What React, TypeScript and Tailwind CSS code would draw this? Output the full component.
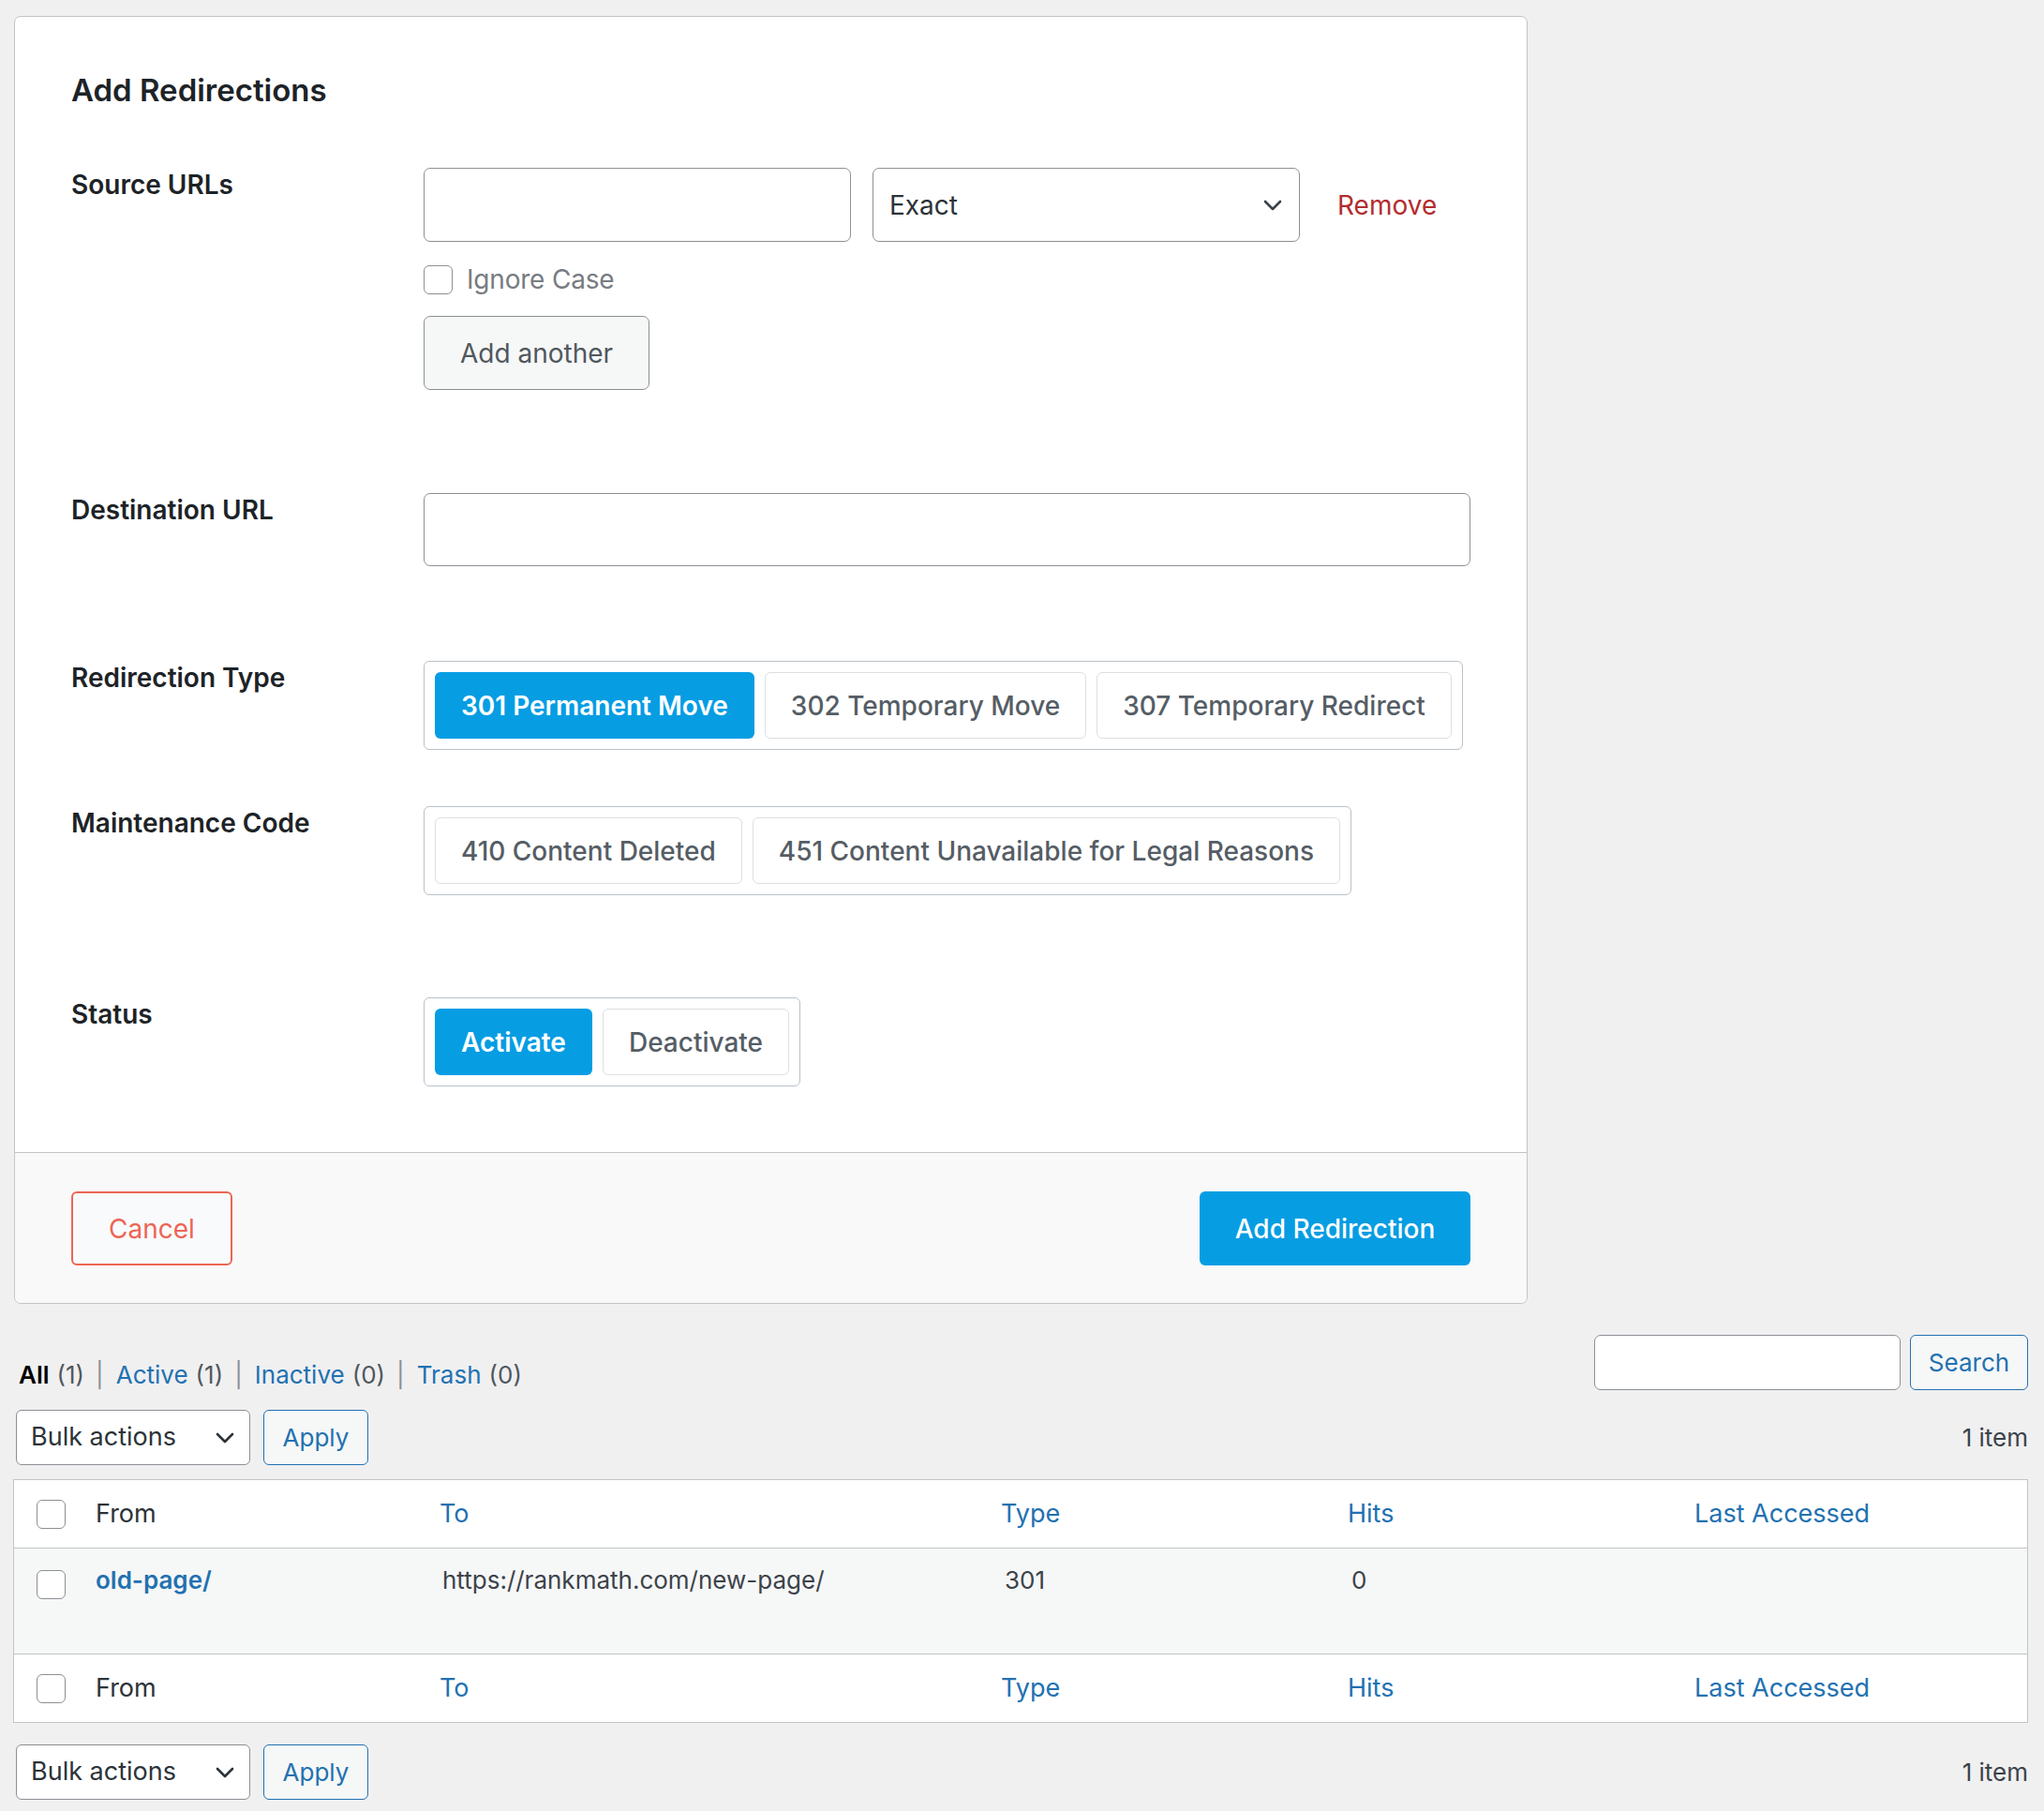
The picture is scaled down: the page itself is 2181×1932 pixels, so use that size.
import React from "react";

function Check() {
  return <span className="block h-[31px] w-[31px] shrink-0 rounded-[6px] border border-[#8c8f94] bg-white" />;
}

function Chevron({ className }: { className: string }) {
  return (
    <svg viewBox="0 0 20 12" className={className} fill="none" stroke="currentColor" strokeWidth="2.6" strokeLinecap="round" strokeLinejoin="round">
      <path d="M2 2 L10 10 L18 2" />
    </svg>
  );
}

function Group({ items, active }: { items: string[]; active?: string }) {
  return (
    <div className="inline-flex gap-[11px] rounded-[6px] border border-[#b9c1c9] p-[11px]">
      {items.map((t) =>
        t === active ? (
          <div key={t} className="flex h-[71px] items-center rounded-[6px] bg-[#069de3] px-[28px] text-[28px] font-semibold text-white">
            {t}
          </div>
        ) : (
          <div key={t} className="flex h-[71px] items-center rounded-[6px] border border-[#dcdfe3] bg-white px-[27px] text-[28px] font-medium text-[#555d65]">
            {t}
          </div>
        )
      )}
    </div>
  );
}

function Label({ children }: { children: React.ReactNode }) {
  return <div className="w-[376px] shrink-0 text-[28px] font-semibold leading-[36px] text-[#1d2327]">{children}</div>;
}

function BulkRow({ count }: { count: string }) {
  return (
    <div className="flex items-center justify-between">
      <div className="flex items-center gap-[14px]">
        <div className="ml-[3px] flex h-[59px] w-[250px] items-center justify-between rounded-[6px] border border-[#8c8f94] bg-white pl-[15px] pr-[16px] text-[27px] text-[#2c3338]">
          <span>Bulk actions</span>
          <Chevron className="h-[12px] w-[20px] text-[#2c3338]" />
        </div>
        <div className="flex h-[59px] w-[112px] items-center justify-center rounded-[6px] border border-[#2271b1] bg-[#f6f7f7] text-[26px] text-[#2271b1]">
          Apply
        </div>
      </div>
      <div className="text-[26px] text-[#3c434a]">{count}</div>
    </div>
  );
}

function HeadRow() {
  return (
    <div className="flex h-[72px] items-center text-[27px]">
      <div className="w-[87px] shrink-0 pl-[24px]">
        <Check />
      </div>
      <div className="w-[367px] shrink-0 text-[#2c3338]">From</div>
      <div className="w-[599px] shrink-0 text-[#2271b1]">To</div>
      <div className="w-[370px] shrink-0 text-[#2271b1]">Type</div>
      <div className="w-[370px] shrink-0 text-[#2271b1]">Hits</div>
      <div className="text-[#2271b1]">Last Accessed</div>
    </div>
  );
}

function Sep() {
  return <span className="ml-[12px] mr-[13px] text-[#8c8f94]">|</span>;
}

export default function App() {
  return (
    <div className="min-h-[1932px] bg-[#f0f0f1] pl-[14px] pr-[17px] pt-[17px] font-['Inter',sans-serif] text-[#3c434a]">
      {/* Card */}
      <div className="ml-[1px] w-[1615px] rounded-[7px] border border-[#c3c4c7] bg-white">
        <div className="pb-[70px] pl-[60px] pt-[58px]">
          <h2 className="text-[33px] font-semibold leading-[40px] text-[#1d2327]">Add Redirections</h2>

          {/* Source URLs */}
          <div className="mt-[63px] flex items-start">
            <Label>Source URLs</Label>
            <div className="flex flex-col">
              <div className="flex items-center">
                <div className="h-[79px] w-[456px] rounded-[7px] border border-[#8c8f94] bg-white" />
                <div className="ml-[23px] flex h-[79px] w-[456px] items-center justify-between rounded-[7px] border border-[#8c8f94] bg-white pl-[17px] pr-[18px] text-[28px] text-[#2c3338]">
                  <span>Exact</span>
                  <Chevron className="h-[12px] w-[20px] text-[#3c434a]" />
                </div>
                <span className="ml-[40px] text-[28px] text-[#b32d2e]">Remove</span>
              </div>
              <div className="mt-[25px] flex items-center gap-[15px]">
                <Check />
                <span className="text-[28px] leading-[31px] tracking-[-0.2px] text-[#787c82]">Ignore Case</span>
              </div>
              <div className="mt-[23px] flex h-[79px] w-[241px] items-center justify-center rounded-[7px] border border-[#8c8f94] bg-[#f6f7f7] text-[28px] text-[#50575e]">
                Add another
              </div>
            </div>
          </div>

          {/* Destination URL */}
          <div className="mt-[110px] flex items-start">
            <Label>Destination URL</Label>
            <div className="h-[78px] w-[1117px] rounded-[7px] border border-[#8c8f94] bg-white" />
          </div>

          {/* Redirection Type */}
          <div className="mt-[101px] flex items-start">
            <Label>Redirection Type</Label>
            <Group items={["301 Permanent Move", "302 Temporary Move", "307 Temporary Redirect"]} active="301 Permanent Move" />
          </div>

          {/* Maintenance Code */}
          <div className="mt-[60px] flex items-start">
            <Label>Maintenance Code</Label>
            <Group items={["410 Content Deleted", "451 Content Unavailable for Legal Reasons"]} />
          </div>

          {/* Status */}
          <div className="mt-[109px] flex items-start">
            <Label>Status</Label>
            <Group items={["Activate", "Deactivate"]} active="Activate" />
          </div>
        </div>

        {/* Footer */}
        <div className="flex items-center justify-between rounded-b-[7px] border-t border-[#c3c4c7] bg-[#f9f9f9] pb-[40px] pl-[60px] pr-[60px] pt-[41px]">
          <div className="flex h-[79px] w-[172px] items-center justify-center rounded-[6px] border-[2px] border-[#ec6555] bg-[#f9fafb] text-[28px] text-[#ec6555]">
            Cancel
          </div>
          <div className="flex h-[79px] w-[289px] items-center justify-center rounded-[6px] bg-[#069de3] text-[28px] font-medium text-white">
            Add Redirection
          </div>
        </div>
      </div>

      {/* Filters + search */}
      <div className="mt-[33px] flex items-start justify-between">
        <div className="ml-[6px] mt-[25px] flex items-center text-[26px] leading-[36px]">
          <span className="font-semibold text-black">All</span>
          <span className="ml-[8px] text-[#50575e]">(1)</span>
          <Sep />
          <span className="text-[#2271b1]">Active</span>
          <span className="ml-[8px] text-[#50575e]">(1)</span>
          <Sep />
          <span className="text-[#2271b1]">Inactive</span>
          <span className="ml-[8px] text-[#50575e]">(0)</span>
          <Sep />
          <span className="text-[#2271b1]">Trash</span>
          <span className="ml-[8px] text-[#50575e]">(0)</span>
        </div>
        <div className="flex items-center gap-[10px]">
          <div className="h-[59px] w-[327px] rounded-[7px] border border-[#8c8f94] bg-white" />
          <div className="flex h-[59px] w-[126px] items-center justify-center rounded-[6px] border border-[#2271b1] bg-[#f6f7f7] text-[26px] text-[#2271b1]">
            Search
          </div>
        </div>
      </div>

      <div className="mt-[19px]">
        <BulkRow count="1 item" />
      </div>

      {/* Table */}
      <div className="mt-[15px] border border-[#c3c4c7] bg-white">
        <div className="border-b border-[#c3c4c7]">
          <HeadRow />
        </div>
        <div className="flex h-[113px] items-start border-b border-[#c3c4c7] bg-[#f6f7f7] text-[26px] leading-[36px]">
          <div className="w-[87px] shrink-0 pl-[24px] pt-[23px]">
            <Check />
          </div>
          <div className="w-[367px] shrink-0 pt-[16px] font-semibold text-[#2271b1]">old-page/</div>
          <div className="w-[599px] shrink-0 pl-[3px] pt-[16px] text-[#3c434a]">https://rankmath.com/new-page/</div>
          <div className="w-[370px] shrink-0 pl-[4px] pt-[16px] text-[#3c434a]">301</div>
          <div className="w-[370px] shrink-0 pl-[4px] pt-[16px] text-[#3c434a]">0</div>
          <div />
        </div>
        <HeadRow />
      </div>

      <div className="mt-[23px]">
        <BulkRow count="1 item" />
      </div>
    </div>
  );
}
